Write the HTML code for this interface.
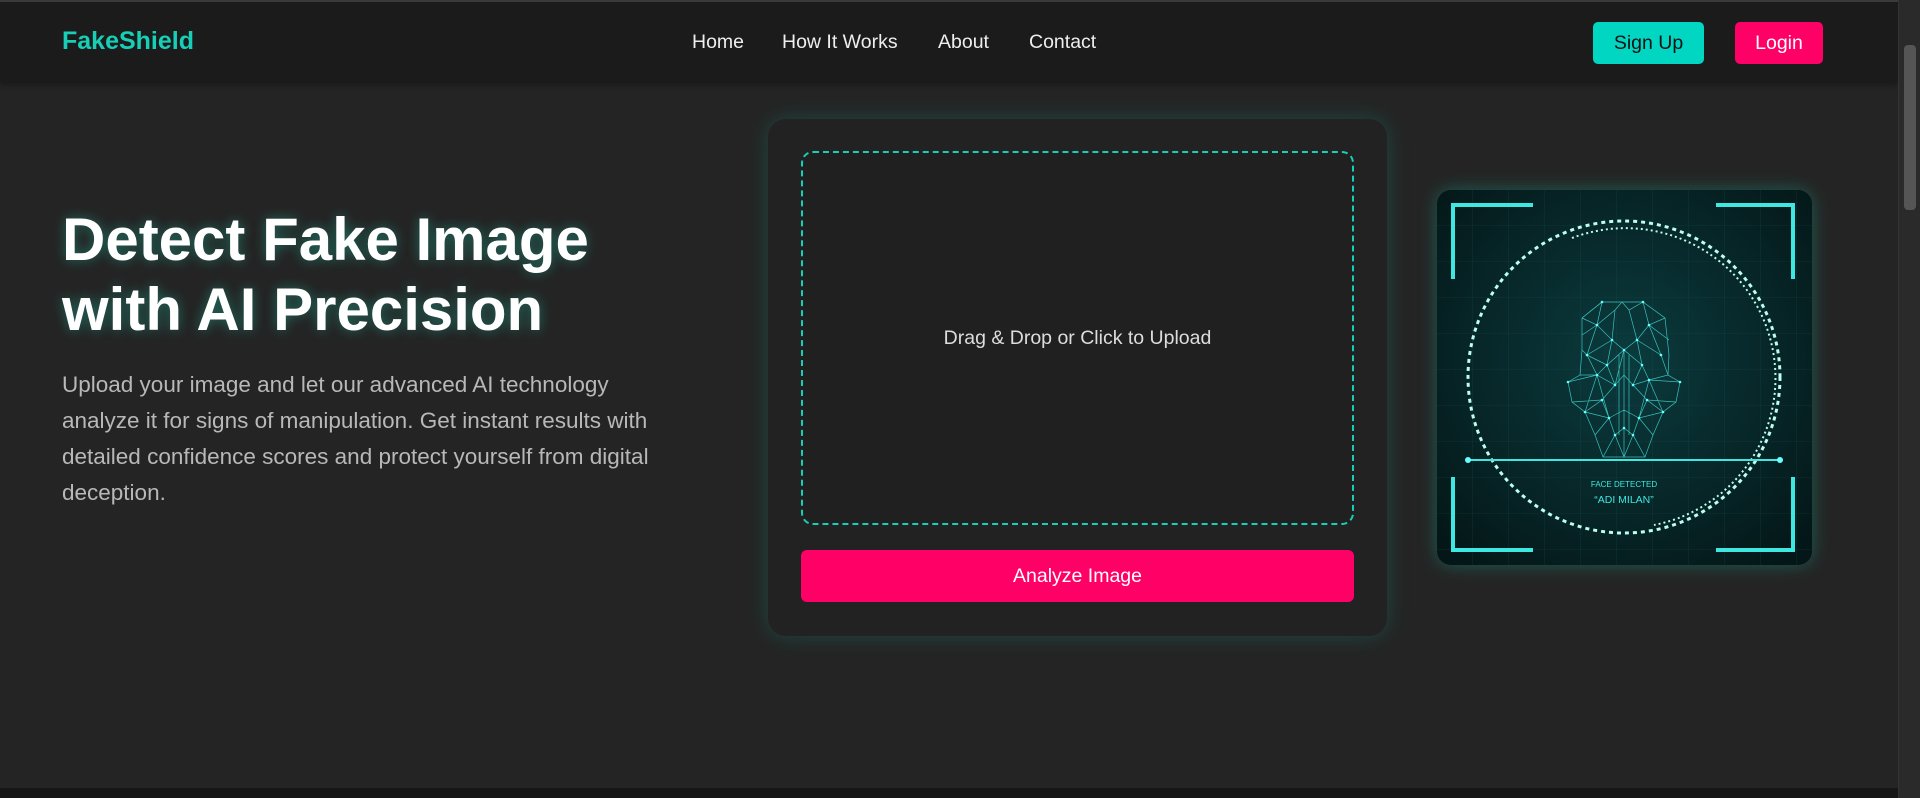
<!DOCTYPE html>
<html><head><meta charset="utf-8"><style>
*{margin:0;padding:0;box-sizing:border-box}
html,body{width:1920px;height:798px;overflow:hidden;background:#242424;font-family:"Liberation Sans",sans-serif}
.nav{position:absolute;left:0;top:0;width:1898px;height:82px;background:#1b1b1b;border-top:2px solid #3a3a3a;box-shadow:0 2px 6px rgba(0,0,0,.4)}
.logo{position:absolute;left:62px;top:25px;font-size:25px;font-weight:bold;color:#17cfb6}
.links a{position:absolute;top:29px;font-size:19.5px;color:#eee;text-decoration:none}
.btn{position:absolute;top:20px;height:42px;border-radius:5px;font-size:19.5px;line-height:42px;text-align:center}
.sb{position:absolute;right:0;top:0;width:22px;height:798px;background:#2a2a2a;border-left:1px solid #333}
.sb i{position:absolute;left:5px;top:45px;width:12px;height:165px;background:#555;border-radius:4px}
h1{position:absolute;left:62px;top:205px;font-size:60px;line-height:70px;color:#fff;font-weight:bold;text-shadow:0 0 12px rgba(30,200,170,.45)}
p.d{position:absolute;left:62px;top:367px;width:630px;font-size:22.5px;line-height:36px;color:#b8b8b8}
.card{position:absolute;left:768px;top:119px;width:619px;height:517px;background:#222;border-radius:18px;box-shadow:0 0 22px rgba(20,200,170,.22)}
.drop{position:absolute;left:33px;top:32px;width:553px;height:374px;border:2px dashed #17cfb6;border-radius:12px;color:#ddd;font-size:19.5px;text-align:center;line-height:370px;background:#202020}
.an{position:absolute;left:33px;top:431px;width:553px;height:52px;background:#ff0066;border-radius:6px;color:#fff;font-size:19.5px;text-align:center;line-height:52px}
.img{position:absolute;left:1437px;top:190px;width:375px;height:375px;border-radius:14px;overflow:hidden;box-shadow:0 0 18px rgba(20,200,170,.35)}
.foot{position:absolute;left:0;top:788px;width:1898px;height:10px;background:#161616}
</style></head><body>
<div class="nav">
<div class="logo">FakeShield</div>
<div class="links"><a style="left:692px">Home</a><a style="left:782px">How It Works</a><a style="left:938px">About</a><a style="left:1029px">Contact</a></div>
<div class="btn" style="left:1593px;width:111px;background:#00d6c2;color:#111">Sign Up</div>
<div class="btn" style="left:1735px;width:88px;background:#ff0066;color:#fff">Login</div>
</div>
<div class="sb"><i></i></div>
<h1>Detect Fake Image<br>with AI Precision</h1>
<p class="d">Upload your image and let our advanced AI technology analyze it for signs of manipulation. Get instant results with detailed confidence scores and protect yourself from digital deception.</p>
<div class="card"><div class="drop">Drag &amp; Drop or Click to Upload</div><div class="an">Analyze Image</div></div>
<div class="img"><svg width="375" height="375" viewBox="0 0 375 375">
<defs><radialGradient id="g" cx="50%" cy="45%" r="70%"><stop offset="0" stop-color="#0b3b3e"/><stop offset="1" stop-color="#041617"/></radialGradient>
<pattern id="p" width="36" height="36" patternUnits="userSpaceOnUse"><path d="M36 0V36H0" fill="none" stroke="#1d5557" stroke-width="0.6"/></pattern></defs>
<rect width="375" height="375" fill="url(#g)"/><rect width="375" height="375" fill="url(#p)" opacity=".6"/>
<g stroke="#3ee8e0" stroke-width="4" fill="none">
<path d="M96 15H16V89"/><path d="M279 15H356V89"/><path d="M16 287V360H96"/><path d="M356 287V360H279"/></g>
<circle cx="187" cy="187" r="156" fill="none" stroke="#bfe" stroke-width="3" stroke-dasharray="4 4"/>
<path d="M135 48A150 150 0 0 1 338 200A150 150 0 0 1 217 335" fill="none" stroke="#bfe" stroke-width="2" stroke-dasharray="2 3"/>
<g stroke="#3fd9d2" stroke-width="0.7" fill="none" opacity=".85">
<path d="M165 112L206 112L228 128L232 165L231 185L243 192L239 212L226 222L216 245L208 267L166 267L158 245L148 222L135 212L131 192L143 185L145 160L145 128Z"/>
<path d="M165 112L160 135L178 120L185 112L192 120L206 112L212 135L228 128M145 128L160 135L175 150L178 120M192 120L200 150L212 135L232 150M145 145L160 135M160 135L150 165L175 150L187 160L200 150L224 165L212 135M145 160L150 165L160 185L143 185M175 150L170 175L187 160L205 175L200 150M224 165L231 185L212 190L205 175M150 165L170 175L160 185L178 195L187 160M205 175L196 195L212 190M187 160L187 267M182 165L182 245M192 165L192 245M131 192L160 185L148 222L165 210L178 195M243 192L212 190L226 222L210 210L196 195M135 212L165 210M239 212L210 210M148 222L172 228L165 210M226 222L202 228L210 210M172 228L187 220L202 228M158 245L172 228L178 245L187 238L196 245L202 228L216 245M166 267L178 245L187 267L196 245L208 267M160 185L172 228M212 190L202 228M145 128L165 112M170 175L178 195L187 185L196 195"/></g>
<g fill="#6ff">
<circle cx="165" cy="112" r="1.3"/><circle cx="206" cy="112" r="1.3"/><circle cx="160" cy="135" r="1.3"/><circle cx="212" cy="135" r="1.3"/><circle cx="175" cy="150" r="1.3"/><circle cx="200" cy="150" r="1.3"/><circle cx="187" cy="160" r="1.3"/><circle cx="150" cy="165" r="1.3"/><circle cx="224" cy="165" r="1.3"/><circle cx="170" cy="175" r="1.3"/><circle cx="205" cy="175" r="1.3"/><circle cx="160" cy="185" r="1.3"/><circle cx="212" cy="190" r="1.3"/><circle cx="178" cy="195" r="1.3"/><circle cx="196" cy="195" r="1.3"/><circle cx="165" cy="210" r="1.3"/><circle cx="210" cy="210" r="1.3"/><circle cx="172" cy="228" r="1.3"/><circle cx="202" cy="228" r="1.3"/><circle cx="187" cy="238" r="1.3"/><circle cx="178" cy="245" r="1.3"/><circle cx="196" cy="245" r="1.3"/><circle cx="131" cy="192" r="1.3"/><circle cx="243" cy="192" r="1.3"/><circle cx="148" cy="222" r="1.3"/><circle cx="226" cy="222" r="1.3"/></g>
<line x1="31" y1="270" x2="343" y2="270" stroke="#3ee8e0" stroke-width="2"/>
<circle cx="31" cy="270" r="3" fill="#6ff"/><circle cx="343" cy="270" r="3" fill="#6ff"/>
<text x="187" y="297" fill="#3ee8e0" font-size="8" text-anchor="middle" font-family="Liberation Sans">FACE DETECTED</text>
<text x="187" y="313" fill="#3ee8e0" font-size="10.5" text-anchor="middle" font-family="Liberation Sans">“ADI MILAN”</text>
</svg></div>
<div class="foot"></div>
</body></html>
